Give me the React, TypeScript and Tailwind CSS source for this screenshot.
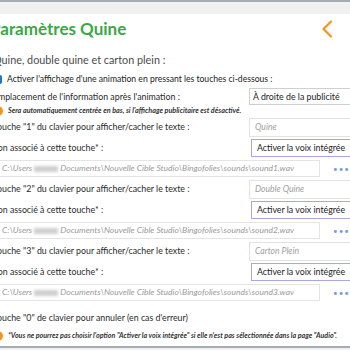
import React from "react";

const Blur: React.FC = () => (
  <span className="inline-block align-middle w-[24px] h-[6px] mx-[2px] bg-[#cfcfcf] blur-[1.5px]" />
);

interface GroupProps {
  keyNum: string;
  placeholder: string;
  file: string;
}

const Group: React.FC<GroupProps> = ({ keyNum, placeholder, file }) => (
  <div className="flex flex-col">
    <div className="grid grid-cols-[256px_1fr] items-center h-[20px]">
      <span className="text-[8.8px] text-[#2a2a2a]">
        Touche "{keyNum}" du clavier pour afficher/cacher le texte :
      </span>
      <div className="h-[19px] w-[130px] border border-[#e2e2e2] flex items-center pl-[5px] text-[8.6px] italic text-[#a0a0a0]">
        {placeholder}
      </div>
    </div>
    <div className="grid grid-cols-[258px_1fr] items-center h-[20px] mt-[1px]">
      <span className="text-[8.8px] text-[#2a2a2a]">Son associé à cette touche* :</span>
      <div className="h-[18px] w-[130px] border border-[#a9a4e6] flex items-center pl-[5px] text-[8.8px] text-[#222]">
        Activer la voix intégrée
      </div>
    </div>
    <div className="flex items-center h-[19px] mt-[1px]">
      <div className="h-[17px] w-[335px] border border-[#e4e4e4] flex items-center pl-[8px] text-[8.5px] italic text-[#9a9a9a] whitespace-nowrap overflow-hidden">
        C:\Users
        <Blur />
        Documents\Nouvelle Cible Studio\Bingofolies\sounds\{file}
      </div>
      <span className="ml-[13px] text-[8px] tracking-[1px] text-[#7b9be0]">•••</span>
    </div>
  </div>
);

const InfoDot: React.FC = () => (
  <span className="w-[10px] h-[10px] rounded-full bg-[#f7941d] shrink-0" />
);

export default function App() {
  return (
    <div className="w-[350px] h-[350px] overflow-hidden bg-white flex flex-col font-['Lato',sans-serif]">
      <div className="h-[2px] bg-[#a6acb5]" />
      <div className="h-[12px] bg-[#f0f0f0]" />

      <div className="flex items-center justify-between h-[30px] -ml-[10px] pr-[17px]">
        <h1 className="text-[17px] font-bold text-[#3aa847]">Paramètres Quine</h1>
        <svg width="12" height="18" viewBox="0 0 12 18" fill="none">
          <polyline
            points="10,1.5 2.5,9 10,16.5"
            stroke="#f7931e"
            strokeWidth="2.2"
            strokeLinecap="round"
            strokeLinejoin="round"
          />
        </svg>
      </div>

      <div className="flex flex-col -ml-[7px]">
        <div className="flex items-center h-[20px] mt-[6px] text-[10.8px] text-[#4a4a4a]">
          Quine, double quine et carton plein :
        </div>

        <div className="flex items-center h-[18px] gap-[5px]">
          <span className="w-[9px] h-[9px] rounded-[2px] bg-[#1e73d2] shrink-0" />
          <span className="text-[8.6px] text-[#222]">
            Activer l'affichage d'une animation en pressant les touches ci-dessous :
          </span>
        </div>

        <div className="grid grid-cols-[256px_1fr] items-center h-[17px]">
          <span className="text-[8.8px] text-[#2a2a2a]">
            Emplacement de l'information après l'animation :
          </span>
          <div className="h-[17px] w-[130px] border border-[#cfcfcf] flex items-center pl-[3px] text-[8.8px] text-[#222]">
            À droite de la publicité
          </div>
        </div>

        <div className="flex items-center h-[12px] gap-[5px]">
          <InfoDot />
          <span className="text-[7.2px] font-bold italic text-[#333]">
            Sera automatiquement centrée en bas, si l'affichage publicitaire est désactivé.
          </span>
        </div>

        <div className="flex flex-col gap-[1px]">
          <Group keyNum="1" placeholder="Quine" file="sound1.wav" />
          <Group keyNum="2" placeholder="Double Quine" file="sound2.wav" />
          <Group keyNum="3" placeholder="Carton Plein" file="sound3.wav" />
        </div>

        <div className="flex items-center h-[16px] mt-[8px] text-[8.8px] text-[#2a2a2a]">
          Touche "0" de clavier pour annuler (en cas d'erreur)
        </div>

        <div className="flex items-center h-[12px] mt-[4px] gap-[5px]">
          <InfoDot />
          <span className="text-[7.1px] font-bold italic text-[#333] whitespace-nowrap">
            *Vous ne pourrez pas choisir l'option "Activer la voix intégrée" si elle n'est pas sélectionnée dans la page "Audio".
          </span>
        </div>
      </div>

      <div className="mt-auto h-[2px] bg-[#a6acb5]" />
      <div className="h-[2px] bg-[#f0f0f0]" />
    </div>
  );
}
